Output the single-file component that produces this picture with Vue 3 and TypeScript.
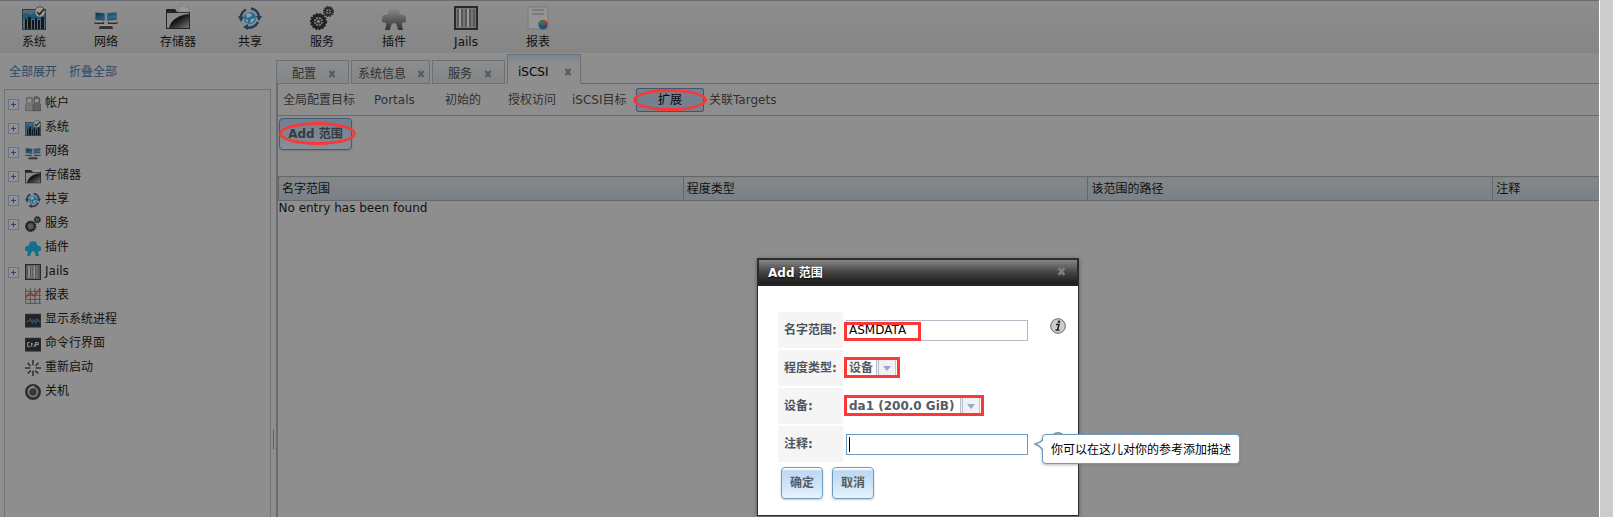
<script setup lang="ts">
import { ref } from 'vue'

interface Item { label: string; icon: string; open?: boolean }

const tools: Item[] = [
  { label: '系统', icon: 'system' },
  { label: '网络', icon: 'network' },
  { label: '存储器', icon: 'storage' },
  { label: '共享', icon: 'share' },
  { label: '服务', icon: 'gears' },
  { label: '插件', icon: 'plugin' },
  { label: 'Jails', icon: 'jails' },
  { label: '报表', icon: 'report' },
]
const tree: Item[] = [
  { label: '帐户', icon: 'users', open: true },
  { label: '系统', icon: 'system', open: true },
  { label: '网络', icon: 'network', open: true },
  { label: '存储器', icon: 'storage', open: true },
  { label: '共享', icon: 'share', open: true },
  { label: '服务', icon: 'gears', open: true },
  { label: '插件', icon: 'plugin' },
  { label: 'Jails', icon: 'jails', open: true },
  { label: '报表', icon: 'chart' },
  { label: '显示系统进程', icon: 'process' },
  { label: '命令行界面', icon: 'shell' },
  { label: '重新启动', icon: 'reboot' },
  { label: '关机', icon: 'power' },
]
const tabs = ['配置', '系统信息', '服务', 'iSCSI']
const subTabs = ['全局配置目标', 'Portals', '初始的', '授权访问', 'iSCSI目标', '扩展', '关联Targets']
const columns = ['名字范围', '程度类型', '该范围的路径', '注释']
const name = ref('ASMDATA')
const comment = ref('')
</script>

<template>
  <svg class="defs" aria-hidden="true">
    <defs>
      <linearGradient id="dark" x1="0" y1="0" x2="1" y2="1">
        <stop offset="0" stop-color="#222" /><stop offset=".45" stop-color="#151515" /><stop offset="1" stop-color="#777" />
      </linearGradient>
      <linearGradient id="blue" x1="0" y1="0" x2="1" y2="1">
        <stop offset="0" stop-color="#0b2f46" /><stop offset="1" stop-color="#2786b2" />
      </linearGradient>
      <linearGradient id="grey" x1="0" y1="0" x2="0" y2="1">
        <stop offset="0" stop-color="#8b8b8b" /><stop offset="1" stop-color="#333" />
      </linearGradient>
      <symbol id="system" viewBox="0 0 24 24">
        <rect x=".5" y="3.500" width="23" height="20" fill="#52697a" stroke="#303a40" />
        <path d="M1 8l4-1 4 2 5-4 9-1v9H1z" fill="#1d5a7c" />
        <path d="M3 23V13h2v10zM6 23V11h3v12zM10 23V14h2v9zM13 23V12h2v11zM16 23V14h2v9zM19 23V11h3v12z" fill="#11171b" />
        <circle cx="18" cy="6" r="5.300" fill="#999" stroke="#4b4b4b" />
        <path d="M15 6l2.500 2.500L22 3" fill="none" stroke="#222" stroke-width="1.700" />
      </symbol>
      <symbol id="network" viewBox="0 0 24 24">
        <path d="M1 6l10 1v8l-10-1zM23 6l-10 1v8l10-1z" fill="#3b474f" stroke="#7b858b" stroke-width=".800" />
        <path d="M2 7l8 1v5l-8-1zM22 7l-8 1v5l8-1z" fill="url(#blue)" />
        <path d="M0 16h10v2H1zM14 16h10l-1 2h-9z" fill="#303030" />
        <path d="M6 19h12l1 4H5z" fill="#333" />
        <path d="M6 19.500h12M1 16h8M15 16h8" stroke="#9b9b9b" />
      </symbol>
      <symbol id="storage" viewBox="0 0 24 24">
        <path d="M0 3h9l2 3h13v17H0z" fill="#222" />
        <path d="M13 1l5-1 5 2v4H13z" fill="#999" stroke="#777" stroke-width=".600" />
        <path d="M1 8h22v14H1z" fill="url(#dark)" />
        <path d="M1 7h22v1C12 9 5 14 3 22H1z" fill="#8a8a8a" />
      </symbol>
      <symbol id="share" viewBox="0 0 24 24">
        <circle cx="12" cy="12" r="6" fill="#266d94" />
        <path d="M8 8l4-1 2 2-2 2-3 1zM13 13l4-1-2 4-3 1zM7 13l3 1v3z" fill="#8ba3ae" />
        <path d="M3 13A9.500 9.500 0 0 1 8 3.500M13 2.500a9.500 9.500 0 0 1 8 8M20 16A9.500 9.500 0 0 1 8 21" fill="none" stroke="#223c54" stroke-width="2.500" />
        <path d="M0 10l6 1-3 5zM18 10h6l-3 5zM10 18v6l-5-3z" fill="#223c54" />
      </symbol>
      <symbol id="gears" viewBox="0 0 24 24">
        <circle cx="8.500" cy="15.500" r="6" fill="#777" stroke="#202020" stroke-width="3" />
        <circle cx="8.500" cy="15.500" r="7.600" fill="none" stroke="#202020" stroke-width="2" stroke-dasharray="2 1.300" />
        <path d="M8.500 9v13M2 15.500h13M4 11l9 9M13 11l-9 9" stroke="#303030" stroke-width="1" />
        <circle cx="8.500" cy="15.500" r="2" fill="#888" stroke="#222" />
        <circle cx="18.500" cy="5.500" r="3.500" fill="#777" stroke="#292929" stroke-width="2" />
        <circle cx="18.500" cy="5.500" r="4.800" fill="none" stroke="#292929" stroke-width="1.500" stroke-dasharray="1.500 1" />
        <path d="M18.500 2v7M15 5.500h7" stroke="#333" />
      </symbol>
      <symbol id="plugin" viewBox="0 0 24 24">
        <path d="M7 3q5-2 10 0l1 5 4 1q2 1 2 4v3l-4 1v3l1 4h-5q-1-7-4-7t-4 7H3l1-4v-3l-4-1v-3q0-3 2-4l4-1z" />
      </symbol>
      <symbol id="jails" viewBox="0 0 24 24">
        <path d="M1 1h22v22H1z" fill="#777" stroke="#292929" stroke-width="2" />
        <path d="M4 3v18M8 3v18M12 3v18M16 3v18M20 3v18" stroke="#3a3a3a" />
        <path d="M6 3v18M14 3v18" stroke="#999" stroke-width="2" />
      </symbol>
      <symbol id="report" viewBox="0 0 24 24">
        <path d="M2 1h20v22H2z" fill="#949494" stroke="#7b7b7b" />
        <path d="M6 4h12M6 8h12" stroke="#747474" stroke-width="1.500" />
        <circle cx="17" cy="19" r="4.500" fill="#244e87" />
        <path d="M17 19l-5-1a5 5 0 0 1 5-4z" fill="#446f4a" /><path d="M17 19v-5q4 0 5 4z" fill="#9c432e" />
      </symbol>
      <symbol id="users" viewBox="0 0 24 24">
        <path d="M2 3q4-3 9 0v7l2 3v9H1v-8l2-3z" fill="#777" stroke="#555" />
        <path d="M13 2q5-3 9 1v8l2 3v8H12v-9l2-2z" fill="#626262" stroke="#484848" />
        <path d="M4 5h5v4H4zM15 5h5v4h-5z" fill="#999" />
      </symbol>
      <symbol id="chart" viewBox="0 0 24 24">
        <path d="M1 0v23h23M1 5h23M1 11h23M1 17h23M8 0v23M15 0v23M22 0v23" fill="none" stroke="#444" stroke-width="1.200" />
        <path d="M1 14l7-7 6 5L23 1" fill="none" stroke="#9b3027" stroke-width="2" />
      </symbol>
      <symbol id="process" viewBox="0 0 24 24">
        <path d="M0 3h24v20H0z" fill="#202527" stroke="#444" />
        <path d="M2 14h4l2-4 3 7 2-6 3 6 2-7 2 4h3" fill="none" stroke="#3c6472" stroke-width="1.500" />
      </symbol>
      <symbol id="shell" viewBox="0 0 24 24">
        <path d="M0 3h24v20H0z" fill="#222" stroke="#444" />
        <path d="M7 10H4v6h4M10 10v6M9 12h3M17 9l-4 8M16 16v-6h4v3h-4" fill="none" stroke="#999" stroke-width="1.500" />
      </symbol>
      <symbol id="reboot" viewBox="0 0 24 24">
        <path d="M12 0v8M12 16v8M0 12h8M16 12h8M4 4l4 5M20 4l-4 5M4 20l5-4M20 20l-5-4" stroke="#343434" stroke-width="2.400" />
      </symbol>
      <symbol id="power" viewBox="0 0 24 24">
        <circle cx="12" cy="12" r="10" fill="#808080" stroke="#303030" stroke-width="4" />
        <circle cx="12" cy="12" r="5.500" fill="#383838" />
        <path d="M5 9q3-6 9-5" fill="none" stroke="#aaa" stroke-width="1.500" />
      </symbol>
    </defs>
  </svg>
  <div class="page">
    <nav class="toolbar">
      <button v-for="t in tools" :key="t.label" class="tool" type="button">
        <svg class="tool-icon"><use :href="'#' + t.icon" /></svg>
        <span>{{ t.label }}</span>
      </button>
    </nav>
    <div class="workspace">
      <aside class="sidebar">
        <div class="links"><a href="#">全部展开</a><a href="#">折叠全部</a></div>
        <ul class="tree">
          <li v-for="n in tree" :key="n.label">
            <button v-if="n.open" class="expander" type="button" :aria-label="n.label"></button>
            <span v-else class="blank"></span>
            <svg class="node-icon"><use :href="'#' + n.icon" /></svg>
            <span class="node-label">{{ n.label }}</span>
          </li>
        </ul>
      </aside>
      <div class="splitter"><i></i></div>
      <main class="content">
        <div class="tabs">
          <div v-for="(t, i) in tabs" :key="t" :class="['tab', { active: i === 3, wide: i === 1 }]">
            <span>{{ t }}</span>
            <button type="button" class="close" aria-label="关闭">
              <svg viewBox="0 0 8 8"><path d="M1.500 1l5 6M6.500 1l-5 6" /></svg>
            </button>
          </div>
          <div class="tab-rest"></div>
        </div>
        <div class="pane">
          <div class="subtabs">
            <button v-for="(s, i) in subTabs" :key="s" type="button" :class="['subtab', 's' + i]">
              {{ s }}<i v-if="i === 5" class="ring"></i>
            </button>
          </div>
          <div class="actions"><button type="button" class="btn add">Add 范围<i class="ring"></i></button></div>
          <table class="grid">
            <thead><tr><th v-for="c in columns" :key="c">{{ c }}</th></tr></thead>
            <tbody><tr><td colspan="4">No entry has been found</td></tr></tbody>
          </table>
        </div>
      </main>
    </div>
    <section class="dialog" role="dialog" aria-labelledby="title">
      <header>
        <h2 id="title">Add 范围</h2>
        <button type="button" class="close" aria-label="关闭">
          <svg viewBox="0 0 8 8"><path d="M1.500 1l5 6M6.500 1l-5 6" /></svg>
        </button>
      </header>
      <form @submit.prevent>
        <div class="row">
          <label for="name">名字范围:</label>
          <div class="field"><input id="name" v-model="name" type="text" /><i class="mark name-mark"></i></div>
          <svg class="info" viewBox="0 0 16 16">
            <circle cx="8" cy="8" r="7.300" fill="#ccc" stroke="#666" />
            <circle cx="9" cy="3.800" r="1.300" fill="#222" />
            <path d="M6 6.500h3l-1.500 5.500h2M5.500 12h3" fill="none" stroke="#222" stroke-width="1.500" />
          </svg>
        </div>
        <div class="row">
          <label for="kind">程度类型:</label>
          <div class="field"><span class="select kind"><select id="kind"><option>设备</option></select><i class="arrow"></i><i class="mark"></i></span></div>
        </div>
        <div class="row">
          <label for="device">设备:</label>
          <div class="field"><span class="select device"><select id="device"><option>da1 (200.0 GiB)</option></select><i class="arrow"></i><i class="mark"></i></span></div>
        </div>
        <div class="row">
          <label for="comment">注释:</label>
          <div class="field"><input id="comment" v-model="comment" class="focused" type="text" /><i class="caret"></i></div>
          <svg class="info" viewBox="0 0 16 16"><circle cx="8" cy="8" r="7.300" fill="#ccc" stroke="#666" /></svg>
          <div class="tip" role="tooltip">
            <svg viewBox="0 0 9 14"><path d="M9 1Q8 4 1 6q7 3 8 7" fill="#fff" stroke="#6f9ac0" stroke-width="1.500" /></svg>
            你可以在这儿对你的参考添加描述
          </div>
        </div>
        <div class="buttons"><button type="submit" class="btn">确定</button><button type="button" class="btn">取消</button></div>
      </form>
    </section>
  </div>
</template>

<style>
body { margin: 0; background: #ccc; }
</style>
<style scoped>
* { box-sizing: border-box; }
.defs { position: absolute; width: 0; height: 0; }
.page {
  position: relative; display: flex; flex-direction: column; min-height: 100vh; margin-right: 13px;
  background: #8e8e8e; border-right: 1px solid #fff; color: #111;
  font: 12px/16px "DejaVu Sans", "Noto Sans CJK SC", sans-serif;
}
button, input, select { font: inherit; color: inherit; margin: 0; }
button { padding: 0; border: 0; background: none; }
.toolbar {
  display: flex; gap: 12px; height: 53px; padding: 5px 4px 0;
  border-top: 1px solid #696a76; background: linear-gradient(#8e8e8e, #858585);
}
.tool { display: flex; flex-direction: column; align-items: center; gap: 4px; width: 60px; height: 44px; }
.tool-icon { width: 24px; height: 24px; fill: url(#grey); }
.node-icon { width: 16px; height: 16px; fill: #176e89; }
.workspace { display: flex; flex: 1; }
.sidebar { display: flex; flex-direction: column; width: 270px; padding-left: 4px; flex: none; }
.links { display: flex; gap: 12px; height: 36px; padding: 11px 5px; }
.links a { color: #2c4966; text-decoration: none; }
.tree {
  flex: 1; margin: 0; padding: 2px 0 0 3px; list-style: none;
  border: 1px solid #727272; border-width: 1px 0 0 1px;
}
.tree li { display: flex; align-items: center; height: 24px; }
.expander, .blank { width: 11px; height: 11px; margin-right: 6px; }
.expander {
  border: 1px solid #66738d;
  background: linear-gradient(#34496b, #34496b) center / 5px 1px no-repeat, linear-gradient(#34496b, #34496b) center / 1px 5px no-repeat, #929292;
}
.node-label { margin: 0 0 2px 4px; }
.splitter { display: flex; align-items: flex-end; width: 6px; margin-top: 36px; padding: 0 0 68px 2px; border-left: 1px solid #727272; flex: none; }
.splitter i { width: 1px; height: 19px; background: #5d6064; }
.content { display: flex; flex-direction: column; flex: 1; min-width: 0; }
.tabs { display: flex; gap: 2px; align-items: flex-end; height: 31px; }
.tab {
  display: flex; align-items: center; justify-content: space-between; width: 73px; height: 24px; padding: 3px 12px 0 15px;
  border: 1px solid #6b7179; border-bottom-color: #6b6e76; background: linear-gradient(#8b8d8f, #858585); color: #303030;
}
.tab.wide { width: 79px; padding: 3px 4px 0 6px; }
.tab.active { width: 74px; height: 30px; padding: 5px 8px 0 10px; border-bottom: 0; background: linear-gradient(#7c8790, #8e8e8e 10px); color: #080808; }
.tab-rest { flex: 1; align-self: stretch; margin-left: -2px; border-bottom: 1px solid #65676b; }
.close { display: flex; }
.close svg { width: 8px; height: 8px; fill: none; stroke: #535c65; stroke-width: 2.2; }
.pane { flex: 1; border-left: 2px solid #6a6b72; }
.subtabs { display: flex; align-items: center; height: 32px; padding-left: 5px; border-bottom: 1px solid #69696b; color: #303030; }
.subtab { position: relative; flex: none; height: 24px; text-align: left; white-space: nowrap; }
.s0 { width: 91px; }
.s1 { width: 71px; }
.s2 { width: 63px; }
.s3 { width: 64px; }
.s4 { width: 64px; }
.s5 { width: 68px; margin-right: 5px; text-align: center; color: #080808; border: 1px solid #43566e; border-radius: 2px; background: #75818e; }
.ring { position: absolute; inset: 0 -4px; border: 3px solid #fb3737; border-radius: 50%; }
.actions { height: 60px; padding: 2px 1px; }
.btn {
  position: relative; height: 32px; padding: 0 9px; border: 1px solid #6f9ac0; border-radius: 4px;
  background: linear-gradient(#fff 1px, #bcd8f4 3px, #cfe5fa 60%, #ebf4fd); color: #555b62; font-weight: 700;
  box-shadow: 0 1px 2px #9998;
}
.add { width: 73px; padding: 0; border-color: #445a70; background: linear-gradient(#708091, #7d8893 60%, #88909a); color: #353b41; box-shadow: 0 1px 2px #6668; white-space: nowrap; }
.add .ring { inset: 3px -5px 4px -1px; }
.grid { width: 100%; table-layout: fixed; border-collapse: collapse; }
.grid th {
  width: 30.65%; height: 24px; padding: 0 3px; font-weight: 400; text-align: left;
  border: 1px solid #65686a; border-width: 1px 0 1px 1px; background: linear-gradient(#858889, #798087);
}
.grid th:last-child { width: auto; }
.grid td { padding: 0; line-height: 14px; }
.dialog { position: absolute; left: 757px; top: 258px; width: 322px; border: 1px solid #2d2d2d; background: #fff; box-shadow: 0 1px 4px #555; }
.dialog header {
  display: flex; align-items: center; justify-content: space-between; height: 27px; padding: 0 11px 0 9px;
  border: 1px solid #292929; background: linear-gradient(#858585, #444 50%, #202020 90%);
}
.dialog h2 { margin: 0; font: inherit; font-weight: 700; color: #fff; text-shadow: 0 1px 2px #000; }
.dialog header svg { width: 9px; height: 9px; stroke: #77818d; margin-bottom: 3px; }
.dialog form { display: flex; flex-direction: column; gap: 2px; padding: 26px 20px 16px; }
.row { position: relative; display: flex; align-items: center; height: 36px; }
.row label { display: flex; flex: none; align-items: center; width: 65px; height: 36px; padding-left: 6px; background: #f5f5f5; color: #4e545c; font-weight: 700; white-space: nowrap; }
.field { position: relative; flex: none; width: 182px; margin-left: 3px; }
.field input { display: block; width: 100%; height: 21px; padding: 0 2px; border: 1px solid #b5bcc7; background: #fff; color: #000; outline: 0; }
.field input.focused { border-color: #6f9ac0; }
.caret { position: absolute; left: 3px; top: 3px; width: 1px; height: 15px; background: #000; }
.mark { position: absolute; inset: -2px -3px -1px; border: 3px solid #fb3737; }
.name-mark { left: -2px; right: auto; width: 77px; top: 2px; bottom: 0; }
.select { position: relative; display: flex; height: 20px; border: 1px solid #b5bcc7; }
.kind { width: 52px; }
.device { width: 136px; }
.select select { width: 100%; padding: 0 2px; border: 0; appearance: none; background: #fff; color: #555b62; font-weight: 700; outline: 0; }
.arrow { position: absolute; right: 1px; top: 0; width: 20px; height: 18px; border: 1px solid #c3c8ce; border-left: 3px double #b5bcc7; background: #f1f1f3; }
.arrow::after { content: ""; position: absolute; left: 4px; top: 6px; border: 4px solid transparent; border-top: 5px solid #8daad4; border-bottom: 0; }
.info { width: 16px; height: 16px; margin: -8px 0 0 22px; flex: none; }
.tip { position: absolute; left: 264px; top: 8px; height: 30px; padding: 7px 8px; border: 1px solid #6f9ac0; border-radius: 4px; background: #fff; color: #000; white-space: nowrap; box-shadow: 0 1px 3px #7778; }
.tip svg { position: absolute; left: -9px; top: 3px; width: 9px; height: 14px; }
.buttons { display: flex; gap: 9px; padding: 3px 3px 0; }
.buttons .btn { width: 42px; padding: 0; }
</style>
